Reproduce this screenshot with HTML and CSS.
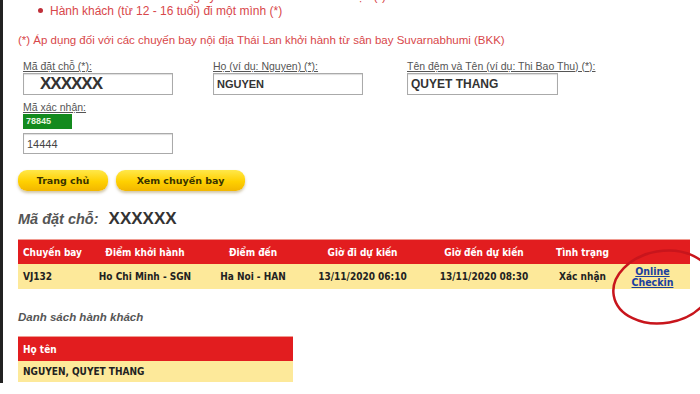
FILE: index.html
```html
<!DOCTYPE html>
<html>
<head>
	<meta charset="utf-8">
	<title>Quản lý đặt chỗ</title>
	<link rel="stylesheet" href="styles.css">
</head>
<body>
	<div class="page">
		<ul class="notes">
			<li>Hành khách cần xuất trình giấy tờ cho nhân viên làm thủ tục (*)</li>
			<li>Hành khách (từ 12 - 16 tuổi) đi một mình (*)</li>
		</ul>
		<p class="note">(*) Áp dụng đối với các chuyến bay nội địa Thái Lan khởi hành từ sân bay Suvarnabhumi (BKK)</p>

		<div class="search">
			<div class="fields">
				<div class="field">
					<span class="label">Mã đặt chỗ (*):</span>
					<div class="input code">XXXXXX</div>
				</div>
				<div class="field">
					<span class="label">Họ (ví dụ: Nguyen) (*):</span>
					<div class="input">NGUYEN</div>
				</div>
				<div class="field third">
					<span class="label">Tên đệm và Tên (ví dụ: Thi Bao Thu) (*):</span>
					<div class="input name">QUYET THANG</div>
				</div>
			</div>
			<div class="field captcha">
				<span class="label">Mã xác nhận:</span>
				<div class="captcha-img">78845</div>
				<div class="input plain">14444</div>
			</div>
		</div>

		<div class="buttons">
			<button class="btn home">Trang chủ</button>
			<button class="btn flights">Xem chuyến bay</button>
		</div>

		<h2 class="booking">Mã đặt chỗ: <span>XXXXXX</span></h2>

		<div class="flight-wrap">
			<table class="grid flights-table">
				<tr>
					<th class="left">Chuyến bay</th>
					<th>Điểm khởi hành</th>
					<th>Điểm đến</th>
					<th>Giờ đi dự kiến</th>
					<th>Giờ đến dự kiến</th>
					<th>Tình trạng</th>
					<th></th>
				</tr>
				<tr>
					<td class="left">VJ132</td>
					<td>Ho Chi Minh - SGN</td>
					<td>Ha Noi - HAN</td>
					<td>13/11/2020 06:10</td>
					<td>13/11/2020 08:30</td>
					<td>Xác nhận</td>
					<td class="checkin"><a href="#">Online<br>Checkin</a></td>
				</tr>
			</table>
			<svg class="mark" width="110" height="80" viewBox="0 0 110 80">
				<ellipse cx="55" cy="40" rx="50" ry="36" fill="none" stroke="#c8151c" stroke-width="2.5" transform="rotate(-10 55 40)"/>
			</svg>
		</div>

		<h3 class="pax-title">Danh sách hành khách</h3>
		<table class="grid pax">
			<tr><th class="left">Họ tên</th></tr>
			<tr><td class="left">NGUYEN, QUYET THANG</td></tr>
		</table>
	</div>
</body>
</html>
```

FILE: styles.css
```css
body{
	margin: 0px;
	padding: 0px;
	background: #fff;
	font-family: "Liberation Sans", Arial, sans-serif;
	overflow: hidden;
}

.page{
	border-left: 3px solid #222;
	min-height: 394px;
	padding-left: 15px;
	box-sizing: border-box;
}

.notes{
	margin: -11px 0 0 0;
	padding: 0 0 0 32px;
	color: #d8474a;
	font-size: 12px;
	line-height: 15px;
	list-style: none;
}

.notes li::before{
	content: '';
	display: inline-block;
	width: 5px;
	height: 5px;
	border-radius: 50%;
	background: #c0303a;
	margin: 0 7px 2px -12px;
	vertical-align: middle;
}

.note{
	margin: 13px 0 0 0;
	color: #d8474a;
	font-size: 11.5px;
	line-height: 16px;
}

.search{
	padding-left: 5px;
	margin-top: 13px;
}

.fields{
	display: flex;
	gap: 40px;
}

.field{
	display: flex;
	flex-direction: column;
	width: 150px;
}

.field.third{
	margin-left: 4px;
}

.label{
	font-size: 10.5px;
	color: #555;
	text-decoration: underline;
	line-height: 11px;
	white-space: nowrap;
	height: 11px;
}

.input{
	width: 150px;
	height: 22px;
	box-sizing: border-box;
	border: 1px solid #aaa;
	box-shadow: inset 0 1px 1px #ddd;
	font-size: 11px;
	font-weight: bold;
	color: #333;
	line-height: 20px;
	padding-left: 3px;
	margin-top: 1px;
}

.input.code{
	font-size: 17px;
	letter-spacing: -1px;
	padding-left: 16px;
	color: #333;
}

.input.name{
	font-size: 12px;
	width: 151px;
}

.input.plain{
	font-weight: normal;
	color: #444;
	height: 21px;
	margin-top: 4px;
}

.captcha{
	margin-top: 7px;
}

.captcha-img{
	width: 49px;
	height: 15px;
	background: #138a1e;
	color: #e8f5e0;
	font-size: 9px;
	font-weight: bold;
	line-height: 15px;
	padding-left: 3px;
	box-sizing: border-box;
	margin-top: 1px;
}

.buttons{
	display: flex;
	gap: 8px;
	margin-top: 16px;
}

.btn{
	border: none;
	border-radius: 9px;
	height: 21px;
	background: linear-gradient(#ffe84a, #ffd000 55%, #f2b600);
	box-shadow: 0 2px 3px rgba(120,90,0,0.35);
	font-family: "DejaVu Sans", sans-serif;
	font-size: 9.5px;
	font-weight: bold;
	color: #3a3300;
	padding: 0;
}

.btn.home{ width: 90px; }
.btn.flights{ width: 129px; }

.booking{
	margin: 17px 0 0 0;
	font-family: "Liberation Sans", sans-serif;
	font-style: italic;
	font-size: 14.5px;
	font-weight: bold;
	color: #555;
	line-height: 22px;
}

.booking span{
	font-style: normal;
	font-size: 17px;
	color: #333;
	margin-left: 6px;
}

.flight-wrap{
	position: relative;
	margin-top: 9px;
}

.grid{
	border-collapse: collapse;
	font-family: "DejaVu Sans Condensed", "Liberation Sans", sans-serif;
}

.grid th{
	background: #e21d1f;
	color: #fff;
	font-size: 10px;
	font-weight: bold;
	height: 24px;
	padding: 0;
	text-align: center;
	border-top: 1px solid #f09a90;
}

.grid td{
	background: #fde99a;
	color: #222;
	font-size: 10px;
	font-weight: bold;
	height: 25px;
	padding: 0;
	text-align: center;
}

.grid .left{
	text-align: left;
	padding-left: 5px;
}

.flights-table{
	width: 672px;
	table-layout: fixed;
}

.flights-table th:nth-child(1){ width: 68px; }
.flights-table th:nth-child(2){ width: 108px; }
.flights-table th:nth-child(3){ width: 108px; }
.flights-table th:nth-child(4){ width: 111px; }
.flights-table th:nth-child(5){ width: 132px; }
.flights-table th:nth-child(6){ width: 65px; }

.checkin a{
	color: #1a3fa0;
	font-size: 10.5px;
	line-height: 11px;
	display: inline-block;
}

.mark{
	position: absolute;
	left: 590px;
	top: 8px;
}

.pax-title{
	margin: 20px 0 0 0;
	font-family: "Liberation Sans", sans-serif;
	font-style: italic;
	font-size: 11.5px;
	font-weight: bold;
	color: #555;
	line-height: 16px;
}

.pax{
	width: 275px;
	margin-top: 11px;
}

.pax th{
	height: 24px;
}

.pax td{
	height: 21px;
}
```
